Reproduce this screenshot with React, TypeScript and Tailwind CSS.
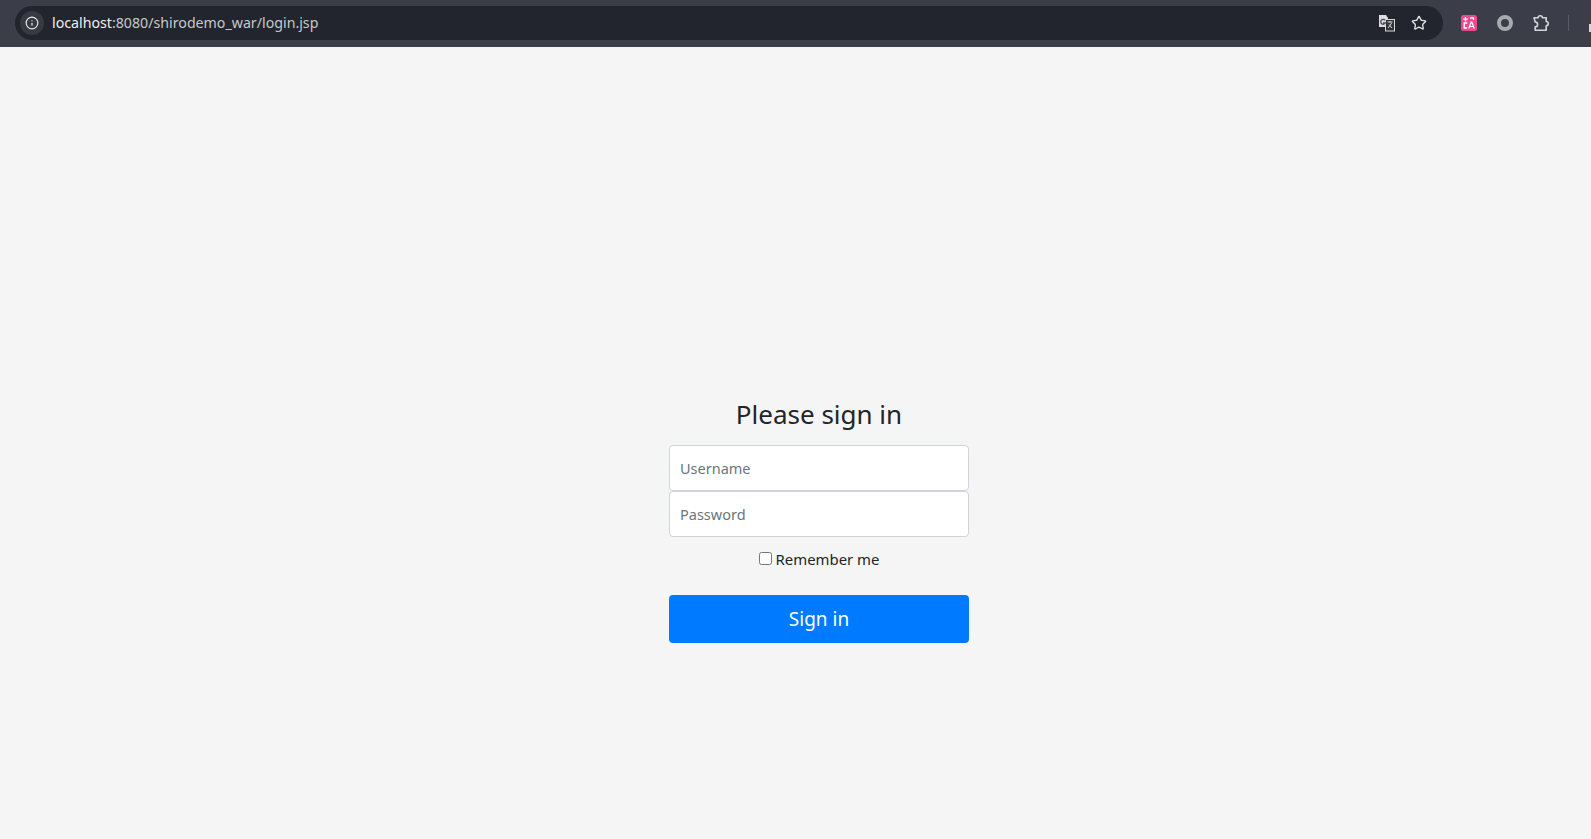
import { Info, Star } from 'lucide-react';

function TranslateIcon() {
  return (
    <svg width="18" height="18" viewBox="0 0 18 18" className="shrink-0">
      <path d="M1 1h7l2 3v9H1z" fill="#dcdde0" />
      <rect x="7.5" y="5.5" width="9" height="11.5" fill="#30323a" stroke="#d5d6d9" />
      <path d="M7 6.3A2.4 2.4 0 1 0 7.2 9H5" fill="none" stroke="#4b4d55" strokeWidth="1.4" />
      <path d="M9.5 8h5M12 7v1.5M10.2 14l3.5-5M11 10.5l3 3.5" stroke="#d5d6d9" strokeWidth="1" fill="none" />
    </svg>
  );
}

function PinkIcon() {
  return (
    <svg width="16" height="16" viewBox="0 0 16 16" className="shrink-0">
      <rect width="16" height="16" rx="2.5" fill="#ec4a8f" />
      <path d="M4.5 2v4.4M2.3 4.2h4.4M9 3h3.5v2" stroke="#fff" strokeWidth="1.3" fill="none" />
      <path d="M6.2 8H3.2v5h3" stroke="#fff" strokeWidth="1.3" fill="none" />
      <path d="M7.8 13.5l2.4-6.5h.6l2.4 6.5M8.8 11.5h3.4" stroke="#fff" strokeWidth="1.2" fill="none" />
    </svg>
  );
}

function ExtensionIcon() {
  return (
    <svg width="18" height="18" viewBox="0 0 18 18" fill="none" stroke="#d5d6d9" strokeWidth="1.6" strokeLinejoin="round" className="ml-[19px] shrink-0">
      <path d="M2 3.8h4.2a2.1 2.1 0 0 1 4.2 0h3.8v3.7a2.1 2.1 0 0 1 0 4.2v4.5H3.2v-3.4a2.4 2.4 0 0 0 0-4.8z" />
    </svg>
  );
}

export default function App() {
  return (
    <div className="h-[839px] overflow-hidden bg-[#f5f5f5] font-['Noto_Sans',sans-serif] text-[#212529]">
      {/* Browser toolbar */}
      <div className="h-[47px] bg-[#3b3e48] pt-[6px] pl-[15px] flex items-start overflow-hidden">
        <div className="w-[1428px] h-[34px] shrink-0 rounded-full bg-[#22252d] flex items-center pl-[5px] pr-[16px]">
          <div className="w-[24px] h-[24px] rounded-full bg-[#373a43] flex items-center justify-center">
            <Info size={14} color="#e6e7e9" strokeWidth={2} />
          </div>
          <div className="ml-[8px] text-[14.2px] text-[#c6c8cc]">
            <span className="text-[#eceef0]">localhost</span>:8080/shirodemo_war/login.jsp
          </div>
          <div className="ml-auto flex items-center gap-[15px]">
            <TranslateIcon />
            <Star size={16} color="#e3e4e6" strokeWidth={2} />
          </div>
        </div>
        <div className="flex items-center h-[34px] ml-[18px] shrink-0">
          <PinkIcon />
          <div className="ml-[20px] w-[16px] h-[16px] rounded-full border-[4px] border-[#a9aaad]" />
          <ExtensionIcon />
          <div className="ml-[18px] w-px h-[16px] bg-[#585b64]" />
          <div className="ml-[20px] w-[8px] h-[8px] mt-[9px] border-t-2 border-l-2 border-[#d5d6d9]" />
        </div>
      </div>

      {/* Login form */}
      <div className="flex justify-center pl-[47px] pt-[335px]">
        <form className="w-[330px] p-[15px] text-center">
          <h1 className="text-[26px] leading-[34px] font-normal mb-[14px]">Please sign in</h1>
          <input
            type="text"
            placeholder="Username"
            className="block w-full h-[46px] px-[10px] text-[14.5px] bg-white border border-[#ced4da] rounded-[4px] placeholder:text-[#6c757d]"
          />
          <input
            type="password"
            placeholder="Password"
            className="block w-full h-[46px] px-[10px] text-[14.5px] bg-white border border-[#ced4da] rounded-[4px] placeholder:text-[#6c757d]"
          />
          <label className="flex items-center justify-center mt-[10px] mb-[24px] h-[24px] text-[14.9px]">
            <input type="checkbox" className="w-[13px] h-[13px] mr-[4px] -mt-[2px]" />
            Remember me
          </label>
          <button
            type="button"
            className="block w-full h-[48px] pt-[1px] rounded-[4px] bg-[#007bff] text-white text-[19px]"
          >
            Sign in
          </button>
        </form>
      </div>
    </div>
  );
}
